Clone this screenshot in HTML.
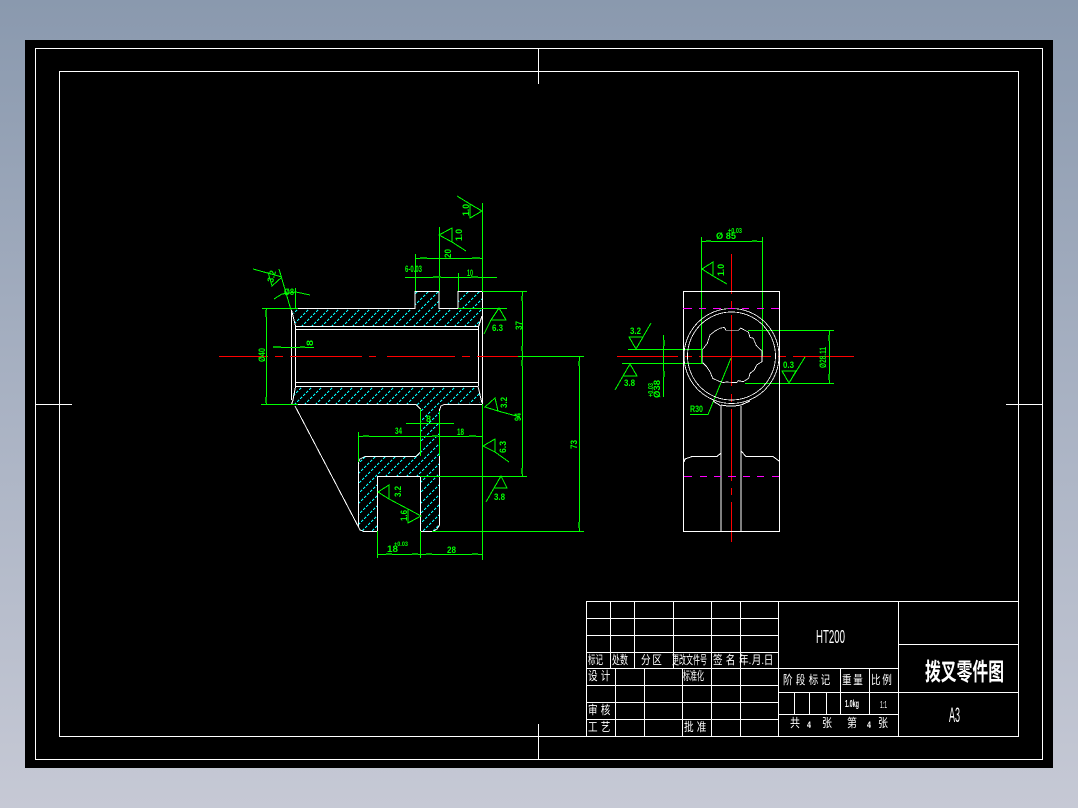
<!DOCTYPE html>
<html><head><meta charset="utf-8">
<style>
html,body{margin:0;padding:0;width:1078px;height:808px;overflow:hidden;background:linear-gradient(180deg,#8a99ae 0%,#a9b2c3 50%,#c6c9d5 100%)}
svg{position:absolute;left:0;top:0;display:block}
.w,.g,.r,.m,.c{fill:none;shape-rendering:crispEdges;stroke-width:1}
.w{stroke:#fff}.g{stroke:#0f0}.r{stroke:#f00}.m{stroke:#f0f}.c{stroke:#0ff;stroke-dasharray:2.83 1.41}
.k{fill:none;stroke:#0a0;stroke-width:2;shape-rendering:crispEdges}
text{font-family:"Liberation Sans","Noto Sans CJK SC",sans-serif}
.t{fill:#fff;font-size:12px}
.n{fill:#0f0;font-size:9px;font-weight:bold}
</style></head><body>
<svg width="1078" height="808" viewBox="0 0 1078 808" xmlns="http://www.w3.org/2000/svg">
<defs>
<clipPath id="h"><path d="M293 309H415V291H439V308H458V291H482V316L478 326H295ZM295 386H478L482 403L444 404L440 408V525L433 531H420V476H377V531H361L358 527V462L365 456H416L420 452V409L416 404H291Z"/></clipPath>
</defs>
<rect x="25" y="40" width="1028" height="728" fill="#000"/>
<!-- frames -->
<path class="w" d="M35.5 48.5H1042.5V759.5H35.5ZM59.5 71.5H1018.5V736.5H59.5ZM538.5 48V84M538.5 724V759M35 404.5H72M1006 404.5H1043"/>

<!-- hatch -->
<path class="c" clip-path="url(#h)" d="M307 280l-260 260M317 280l-260 260M327 280l-260 260M338 280l-260 260M348 280l-260 260M358 280l-260 260M368 280l-260 260M378 280l-260 260M389 280l-260 260M399 280l-260 260M409 280l-260 260M419 280l-260 260M429 280l-260 260M440 280l-260 260M450 280l-260 260M460 280l-260 260M470 280l-260 260M480 280l-260 260M491 280l-260 260M501 280l-260 260M511 280l-260 260M521 280l-260 260M531 280l-260 260M542 280l-260 260M552 280l-260 260M562 280l-260 260M572 280l-260 260M582 280l-260 260M593 280l-260 260M603 280l-260 260M613 280l-260 260M623 280l-260 260M633 280l-260 260M644 280l-260 260M654 280l-260 260M664 280l-260 260M674 280l-260 260M684 280l-260 260M695 280l-260 260M705 280l-260 260M715 280l-260 260M725 280l-260 260"/>

<!-- left view white -->
<path class="w" d="M293 308.500H415V291.500H439V308.500H458V291.500H482.500V404.500H444L441 406L439.500 410V525L437 529L433 531.500H420.500V476.500H377.500V531.500H364L360 530L358.500 527V462L360 459L365 456.500H416L420.500 452V409L416 404.500H291.500L293 400L295.500 386.500H478L482 403M291.500 310L295.500 326M295.500 326.500H478.500L482 316M295.500 329.500H478.500M295.500 382.500H478.500M291.500 310V400M295.500 326V386M478.500 326V386M295 406L358.500 527"/>

<!-- red left -->
<path class="r" d="M219 356.500H268M275 356.500H283M290 356.500H362M369 356.500H376M387 356.500H455M462 356.500H470M477 356.500H518"/>
<!-- red right -->
<path class="r" d="M617 356.500H678M685 356.500H692M699 356.500H771M778 356.500H786M793 356.500H854M731.500 254V294M731.500 301V308M731.500 315V386M731.500 394V402M731.500 409V481M731.500 488V495M731.500 502V542"/>

<!-- left view green -->
<path class="g" d="M262 308.500H298M266.500 308V404M261 404.500H298M295.500 288V308M277 347.500H314M253 269L282 277M268 272L272 286L282 277M279 269L291 310M274 299L282 294L296 292L310 295
M482.500 203V291M470 204V218L482 211ZM457 196L470 204M439 235L452 228V242ZM452 242L466 251M439.500 227V291M415.500 254V291M415 258.500H482M405 277.500H497M458.500 273V291M482 291.500H527M458 308.500H507M522.500 291V476M518 356.500H584M579.500 356V531M499 308L491 320H506ZM491 320L484 334
M485 407L495 398L498 411ZM498 411L520 417M483 446L495 439V452ZM495 452L509 462M420 476.500H527M358 436.500H482M358.500 432V462M406 423.500H454M420.500 409V456M439.500 411V456M432 531.500H584M482.500 404V560M377.500 531V558M420.500 531V558M377 554.500H482M501 476L494 488H507ZM494 488L486 502
M378 492L389 485V499ZM389 499L408 509M421 516L408 509V523Z
M701.500 237V363M762.500 237V356M701 241.500H762M702 269L713 262V276ZM713 276L727 284M628 349.500H703M622 363.500H704M663.500 335V397M629 337H643L636 349ZM636 349L651 323M630 364L623 376H637ZM623 376L615 390M690 414.500H708L731 358M748 330.500H834M745 383.500H834M829.500 330V383M782 371H796L789 383ZM789 383L805 357"/>
<!-- dimension ticks -->
<path class="k" d="M266 310V317M266 397V403M420 258H427M472 258H480M433 277H441M471 277H478M522 296V301M522 346V351M522 360V366M579 361V366M522 468V474M579 522V528M363 436H369M432 436H438M469 436H476M386 554H392M412 554H418M426 554H432M472 554H478M706 241H711M752 241H757M664 340V346M664 371V377M829 335V341M829 374V380M273 347H281M300 347H305"/>

<!-- right view white -->
<path class="w" d="M683.500 291.500H779.500V531.500H683.500Z"/>
<circle class="w" style="stroke-width:.8" cx="731.500" cy="356" r="47.500"/>
<circle class="w" style="stroke-width:.8" cx="731.500" cy="356" r="44"/>
<g transform="translate(690 310) scale(.33333)"><path fill="none" stroke="#fff" stroke-width="2.4" shape-rendering="crispEdges" d="M108 61H145L152 54L163 60L175 66L180 82L190 85L198 105L210 118L216 122V155L200 165L193 180L180 190L176 205L160 215L145 212L140 218L108 216L100 218L85 213L68 205L60 185L50 170L38 158V118L52 100L60 75L75 63L90 55L103 52Z"/></g>
<path class="w" d="M713 401L721 406V531M741 406V531M721 405Q731 407 741 405L750 401M684 462L685 459L692 456.500H717L721 453M741 451L746 456.500H773L779 461"/>
<!-- magenta -->
<path class="m" d="M683 308.500H692M699 308.500H706M713 308.500H721M728 308.500H735M742 308.500H749M757 308.500H764M771 308.500H779M684 476.500H692M700 476.500H707M714 476.500H721M728 476.500H736M743 476.500H750M757 476.500H764M772 476.500H779"/>

<!-- green labels -->
<text class="n" transform="translate(273 283) rotate(-75)" textLength="12" lengthAdjust="spacingAndGlyphs">3.2</text>
<text class="n" x="284" y="295" textLength="10" lengthAdjust="spacingAndGlyphs">Ø8</text>
<text class="n" transform="translate(265 362) rotate(-90)" textLength="14" lengthAdjust="spacingAndGlyphs">Ø40</text>
<text class="n" transform="translate(313 346) rotate(-90)" textLength="6" lengthAdjust="spacingAndGlyphs">8</text>
<text class="n" transform="translate(469 216) rotate(-90)" textLength="12" lengthAdjust="spacingAndGlyphs">1.0</text>
<text class="n" transform="translate(462 241) rotate(-90)" textLength="12" lengthAdjust="spacingAndGlyphs">1.0</text>
<text class="n" transform="translate(451 258) rotate(-90)" textLength="9" lengthAdjust="spacingAndGlyphs">20</text>
<text class="n" x="405" y="272" textLength="17" lengthAdjust="spacingAndGlyphs">6-0.03</text>
<text class="n" x="467" y="276" textLength="6" lengthAdjust="spacingAndGlyphs">10</text>
<text class="n" x="492" y="331" textLength="11" lengthAdjust="spacingAndGlyphs">6.3</text>
<text class="n" transform="translate(522 330) rotate(-90)" textLength="9" lengthAdjust="spacingAndGlyphs">37</text>
<text class="n" transform="translate(507 408) rotate(-90)" textLength="11" lengthAdjust="spacingAndGlyphs">3.2</text>
<text class="n" transform="translate(521 421) rotate(-90)" textLength="8" lengthAdjust="spacingAndGlyphs">94</text>
<text class="n" transform="translate(506 453) rotate(-90)" textLength="12" lengthAdjust="spacingAndGlyphs">6.3</text>
<text class="n" x="494" y="500" textLength="11" lengthAdjust="spacingAndGlyphs">3.8</text>
<text class="n" transform="translate(577 449) rotate(-90)" textLength="9" lengthAdjust="spacingAndGlyphs">73</text>
<text class="n" x="426" y="422" textLength="5" lengthAdjust="spacingAndGlyphs">8</text>
<text class="n" x="395" y="434" textLength="7" lengthAdjust="spacingAndGlyphs">34</text>
<text class="n" x="457" y="435" textLength="7" lengthAdjust="spacingAndGlyphs">18</text>
<text class="n" transform="translate(401 497) rotate(-90)" textLength="11" lengthAdjust="spacingAndGlyphs">3.2</text>
<text class="n" transform="translate(407 521) rotate(-90)" textLength="11" lengthAdjust="spacingAndGlyphs">1.6</text>
<text class="n" x="387" y="552" textLength="11" lengthAdjust="spacingAndGlyphs">18</text>
<text class="n" x="394" y="546" style="font-size:6px" textLength="14" lengthAdjust="spacingAndGlyphs">+0.03</text>
<text class="n" x="447" y="553" textLength="9" lengthAdjust="spacingAndGlyphs">28</text>
<text class="n" x="716" y="239" textLength="20" lengthAdjust="spacingAndGlyphs">Ø 85</text>
<text class="n" x="728" y="233" style="font-size:7px" textLength="14" lengthAdjust="spacingAndGlyphs">+0.03</text>
<text class="n" transform="translate(724 276) rotate(-90)" textLength="12" lengthAdjust="spacingAndGlyphs">1.0</text>
<text class="n" x="630" y="334" textLength="11" lengthAdjust="spacingAndGlyphs">3.2</text>
<text class="n" x="624" y="386" textLength="11" lengthAdjust="spacingAndGlyphs">3.8</text>
<text class="n" transform="translate(660 398) rotate(-90)" textLength="18" lengthAdjust="spacingAndGlyphs">Ø38</text>
<text class="n" transform="translate(653 397) rotate(-90)" style="font-size:7px" textLength="14" lengthAdjust="spacingAndGlyphs">+0.03</text>
<text class="n" x="690" y="412" textLength="13" lengthAdjust="spacingAndGlyphs">R30</text>
<text class="n" x="783" y="368" textLength="11" lengthAdjust="spacingAndGlyphs">0.3</text>
<text class="n" transform="translate(826 368) rotate(-90)" textLength="21" lengthAdjust="spacingAndGlyphs">Ø28.11</text>

<!-- title block -->
<path class="w" d="M586.500 601.500H1018M586.500 618.500H778M586.500 635.500H778M586.500 652.500H778M586.500 668.500H898M586.500 685.500H778M586.500 702.500H778M586.500 719.500H778M586.500 601V736M610.500 601V668M634.500 601V668M673.500 601V668M711.500 601V736M740.500 601V736M778.500 601V736M615.500 668V736M644.500 668V736M682.500 668V736M898.500 601V736M898 644.500H1018M778 692.500H1018M778 714.500H898M840.500 668V714M869.500 668V714M794.500 692V714M809.500 692V714M826.500 692V714"/>

<text class="t" x="588" y="664" textLength="15" lengthAdjust="spacingAndGlyphs">标记</text>
<text class="t" x="612" y="664" textLength="16" lengthAdjust="spacingAndGlyphs">处数</text>
<g transform="translate(641 664) scale(.8 1)"><text class="t" x="0">分</text><text class="t" x="14">区</text></g>
<text class="t" x="672" y="664" textLength="35" lengthAdjust="spacingAndGlyphs">更改文件号</text>
<g transform="translate(713 664) scale(.8 1)"><text class="t" x="0">签</text><text class="t" x="16">名</text></g>
<g transform="translate(739 664) scale(.8 1)"><text class="t" x="0">年.</text><text class="t" x="16">月.</text><text class="t" x="31">日</text></g>
<g transform="translate(588 680) scale(.8 1)"><text class="t" x="0">设</text><text class="t" x="16">计</text></g>
<text class="t" x="683" y="680" textLength="21" lengthAdjust="spacingAndGlyphs">标准化</text>
<g transform="translate(588 714) scale(.8 1)"><text class="t" x="0">审</text><text class="t" x="16">核</text></g>
<g transform="translate(588 731) scale(.8 1)"><text class="t" x="0">工</text><text class="t" x="16">艺</text></g>
<g transform="translate(684 731) scale(.8 1)"><text class="t" x="0">批</text><text class="t" x="16">准</text></g>
<text class="t" x="816" y="643" style="font-size:18px" textLength="29" lengthAdjust="spacingAndGlyphs">HT200</text>
<g transform="translate(783 684) scale(.8 1)"><text class="t" x="0">阶</text><text class="t" x="16">段</text><text class="t" x="32">标</text><text class="t" x="47">记</text></g>
<g transform="translate(842 684) scale(.8 1)"><text class="t" x="0">重</text><text class="t" x="14">量</text></g>
<g transform="translate(871 684) scale(.8 1)"><text class="t" x="0">比</text><text class="t" x="14">例</text></g>
<text class="t" x="845" y="707" style="font-size:10px;font-weight:bold" textLength="14" lengthAdjust="spacingAndGlyphs">1.0kg</text>
<text class="t" x="880" y="708" style="font-size:10px" textLength="7" lengthAdjust="spacingAndGlyphs">1:1</text>
<text class="t" x="790" y="727" textLength="10" lengthAdjust="spacingAndGlyphs">共</text>
<text class="t" x="807" y="728" style="font-size:9px;font-weight:bold" textLength="4" lengthAdjust="spacingAndGlyphs">4</text>
<text class="t" x="822" y="727" textLength="10" lengthAdjust="spacingAndGlyphs">张</text>
<text class="t" x="847" y="727" textLength="10" lengthAdjust="spacingAndGlyphs">第</text>
<text class="t" x="867" y="728" style="font-size:9px;font-weight:bold" textLength="4" lengthAdjust="spacingAndGlyphs">4</text>
<text class="t" x="878" y="727" textLength="10" lengthAdjust="spacingAndGlyphs">张</text>
<text class="t" x="925" y="680" style="font-size:24px;font-weight:bold" textLength="79" lengthAdjust="spacingAndGlyphs">拨叉零件图</text>
<text class="t" x="949" y="722" style="font-size:21px" textLength="11" lengthAdjust="spacingAndGlyphs">A3</text>
</svg>
</body></html>
